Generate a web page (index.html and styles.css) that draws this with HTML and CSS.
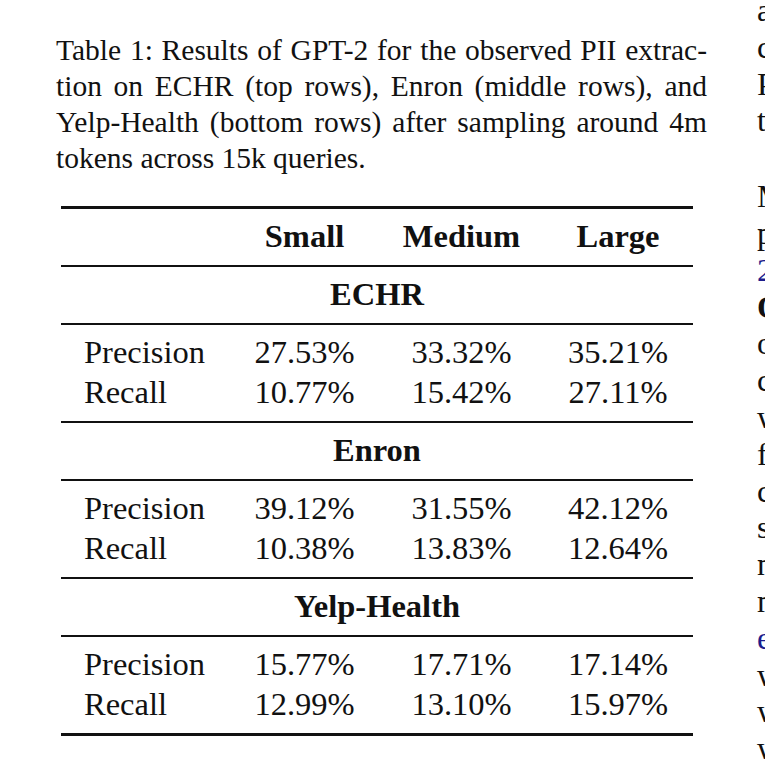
FILE: index.html
```html
<!DOCTYPE html>
<html lang="en">
<head>
<meta charset="utf-8">
<title>Table 1</title>
<link rel="stylesheet" href="styles.css">
</head>
<body>
<div class="page">
  <div class="left-col">
    <p class="caption">
      <span class="jline">Table 1: Results of GPT-2 for the observed PII extrac-</span>
      <span class="jline">tion on ECHR (top rows), Enron (middle rows), and</span>
      <span class="jline">Yelp-Health (bottom rows) after sampling around 4m</span>
      <span class="lline">tokens across 15k queries.</span>
    </p>
    <table class="results">
      <colgroup>
        <col class="c-label">
        <col class="c-num">
        <col class="c-num">
        <col class="c-last">
      </colgroup>
      <thead>
        <tr><th></th><th>Small</th><th>Medium</th><th>Large</th></tr>
      </thead>
      <tbody>
        <tr><th colspan="4" class="section">ECHR</th></tr>
      </tbody>
      <tbody>
        <tr><td class="label">Precision</td><td>27.53%</td><td>33.32%</td><td>35.21%</td></tr>
        <tr><td class="label">Recall</td><td>10.77%</td><td>15.42%</td><td>27.11%</td></tr>
      </tbody>
      <tbody>
        <tr><th colspan="4" class="section">Enron</th></tr>
      </tbody>
      <tbody>
        <tr><td class="label">Precision</td><td>39.12%</td><td>31.55%</td><td>42.12%</td></tr>
        <tr><td class="label">Recall</td><td>10.38%</td><td>13.83%</td><td>12.64%</td></tr>
      </tbody>
      <tbody>
        <tr><th colspan="4" class="section">Yelp-Health</th></tr>
      </tbody>
      <tbody class="last">
        <tr><td class="label">Precision</td><td>15.77%</td><td>17.71%</td><td>17.14%</td></tr>
        <tr><td class="label">Recall</td><td>12.99%</td><td>13.10%</td><td>15.97%</td></tr>
      </tbody>
    </table>
  </div>
  <div class="right-col">
    <p class="para">
      <span class="line">as the attacker only observes</span>
      <span class="line">contents generated by the</span>
      <span class="line">PII that appear in the</span>
      <span class="line">training data.</span>
    </p>
    <p class="para">
      <span class="line">Model. We evaluate the</span>
      <span class="line">pretrained models (Radford et al.,</span>
      <span class="line"><span class="cite">2019</span>) in three sizes.</span>
      <span class="line"><b>Observations.</b> The results</span>
      <span class="line">of the extraction show</span>
      <span class="line">considerable leakage</span>
      <span class="line">when models are fine-tuned</span>
      <span class="line">for more epochs on each</span>
      <span class="line">corpus. We observe that</span>
      <span class="line">smaller models leak</span>
      <span class="line">names and locations</span>
      <span class="line">more frequently, as</span>
      <span class="line"><span class="cite">et al.</span> also report,</span>
      <span class="line">which suggests that</span>
      <span class="line">with larger capacity</span>
      <span class="line">we expect</span>
    </p>
  </div>
</div>
</body>
</html>
```

FILE: styles.css
```css
html {
  overflow: hidden;
  background: #ffffff;
}

body {
  margin: 0;
  font-family: "Liberation Serif", "Times New Roman", serif;
  color: #111111;
}

.page {
  display: flex;
  align-items: flex-start;
  width: 1200px;
}

.left-col {
  width: 651px;
  padding-left: 56px;
  padding-top: 32px;
  flex: none;
}

.caption {
  margin: 0;
  font-size: 29.5px;
  line-height: 36px;
}

.jline {
  display: block;
  text-align: justify;
  text-align-last: justify;
  white-space: nowrap;
}

.lline {
  display: block;
  white-space: nowrap;
}

.results {
  margin-top: 30px;
  margin-left: 5px;
  width: 632px;
  border-collapse: collapse;
  table-layout: fixed;
  font-size: 32.5px;
}

.c-label { width: 165px; }
.c-num { width: 157px; }
.c-last { width: 153px; }

.results thead {
  border-top: 3px solid #111;
  border-bottom: 2px solid #111;
}

.results tbody {
  border-bottom: 2px solid #111;
}

.results tbody.last {
  border-bottom: 3px solid #111;
}

.results th,
.results td {
  height: 40px;
  line-height: 40px;
  padding: 0;
  text-align: center;
  white-space: nowrap;
}

.results th {
  font-weight: bold;
}

.results th:last-child,
.results td:last-child {
  padding-left: 3px;
}

.results th.section {
  padding-left: 0;
}

.results tr:first-child > th,
.results tr:first-child > td {
  padding-top: 7px;
}

.results tr:last-child > th,
.results tr:last-child > td {
  padding-bottom: 9px;
}

.results td.label {
  text-align: left;
  padding-left: 23px;
}

.right-col {
  margin-left: 50px;
  margin-top: -8px;
  flex: none;
  width: 420px;
  font-size: 32.5px;
  line-height: 36.8px;
}

.para {
  margin: 0;
}

.para + .para {
  margin-top: 39px;
}

.line {
  display: block;
  white-space: nowrap;
}

.cite {
  color: #1c1c8c;
}
```
